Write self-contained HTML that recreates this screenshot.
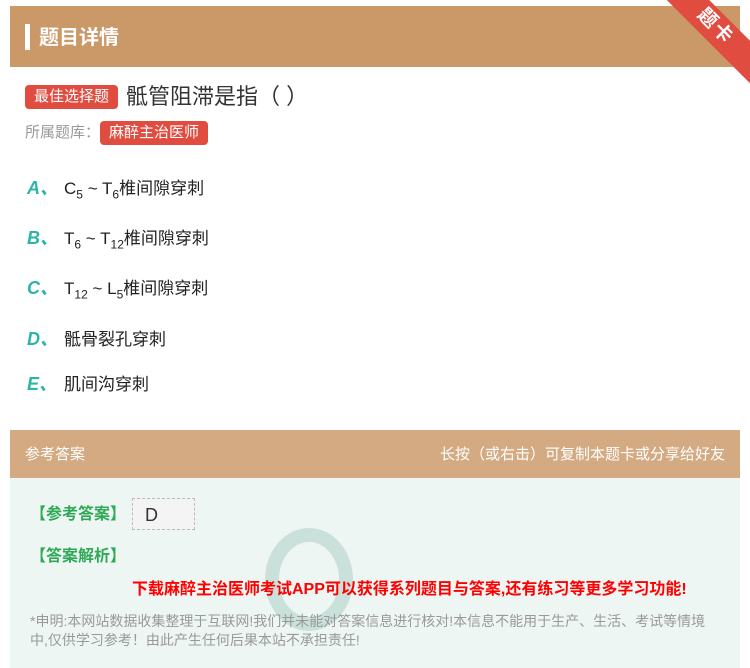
<!DOCTYPE html>
<html><head><meta charset="utf-8"><style>
body{margin:0;width:750px;height:668px;background:#fff;font-family:"Liberation Sans","Noto Sans CJK SC",sans-serif;position:relative;overflow:hidden}
.hd{position:absolute;left:10px;top:6px;width:730px;height:61px;background:#cb9868}
.hd .bar{position:absolute;left:15px;top:18px;width:5px;height:26px;background:#fff}
.hd .t{position:absolute;left:29px;top:15px;color:#fff;font-size:20px;font-weight:bold}
.rib{position:absolute;right:-30px;top:12px;width:130px;height:30px;background:#e04d40;transform:rotate(45deg);color:#fff;font-size:19px;font-weight:bold;text-align:center;line-height:30px;letter-spacing:2px}
.tag{display:inline-block;background:#e04d40;color:#fff;border-radius:4px;font-size:15px;padding:0 9px;line-height:24px}
.q{position:absolute;left:25px;top:79px;font-size:22px;color:#333}
.lib{position:absolute;left:25px;top:121px;font-size:15px;color:#999}
.op{position:absolute;left:27px;font-size:17px;color:#222}
.op b{color:#2bb5a6;font-style:italic;font-size:18px;display:inline-block;width:37px}
sub{font-size:12px}
.ah{position:absolute;left:10px;top:430px;width:730px;height:48px;background:#d3aa82;color:#fff;font-size:15px}
.ab{position:absolute;left:10px;top:478px;width:730px;height:190px;background:#eef6f4}
.g{color:#2eaa57;font-size:16px;font-weight:bold;position:absolute}
</style></head><body>
<div class="hd"><div class="bar"></div><div class="t">题目详情</div></div>
<div class="rib">题卡</div>
<div class="q"><span class="tag" style="vertical-align:3px;margin-right:8px">最佳选择题</span>骶管阻滞是指（ ）</div>
<div class="lib">所属题库：<span class="tag">麻醉主治医师</span></div>
<div class="op" style="top:174px"><b>A、</b>C<sub>5</sub> ~ T<sub>6</sub>椎间隙穿刺</div>
<div class="op" style="top:224px"><b>B、</b>T<sub>6</sub> ~ T<sub>12</sub>椎间隙穿刺</div>
<div class="op" style="top:274px"><b>C、</b>T<sub>12</sub> ~ L<sub>5</sub>椎间隙穿刺</div>
<div class="op" style="top:325px"><b>D、</b>骶骨裂孔穿刺</div>
<div class="op" style="top:370px"><b>E、</b>肌间沟穿刺</div>
<div class="ah"><span style="position:absolute;left:15px;top:13px">参考答案</span><span style="position:absolute;right:15px;top:13px">长按（或右击）可复制本题卡或分享给好友</span></div>
<div class="ab">
<div class="g" style="left:20px;top:22px">【参考答案】</div>
<div style="position:absolute;left:122px;top:20px;width:63px;height:32px;background:#f4f4f4;border:1px dashed #bbb;font-size:18px;color:#333;padding-left:12px;box-sizing:border-box;line-height:32px">D</div>
<div class="g" style="left:20px;top:64px">【答案解析】</div>
<div style="position:absolute;left:255px;top:50px;width:60px;height:75px;border-radius:50%;border:14px solid #b9d8cf;opacity:.7"></div>
<div style="position:absolute;left:122px;top:97px;color:#f00;font-size:16px;font-weight:bold">下载麻醉主治医师考试APP可以获得系列题目与答案,还有练习等更多学习功能!</div>
<div style="position:absolute;left:20px;top:134px;width:690px;color:#999;font-size:14px;line-height:19px">*申明:本网站数据收集整理于互联网!我们并未能对答案信息进行核对!本信息不能用于生产、生活、考试等情境中,仅供学习参考！由此产生任何后果本站不承担责任!</div>
</div>
</body></html>
